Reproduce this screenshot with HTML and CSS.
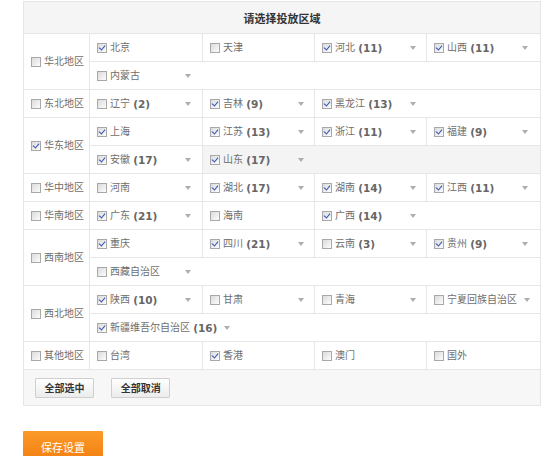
FILE: index.html
```html
<!DOCTYPE html>
<html lang="zh-CN">
<head>
<meta charset="utf-8">
<title>请选择投放区域</title>
<link rel="stylesheet" href="styles.css">
</head>
<body>
<div class="page">
  <table class="area">
    <colgroup>
      <col class="c-region"><col class="c-p1"><col class="c-p2"><col class="c-p3"><col class="c-p4">
    </colgroup>
    <thead>
      <tr><th colspan="5">请选择投放区域</th></tr>
    </thead>
    <tbody>
      <tr class="r">
        <td rowspan="2" class="region"><span class="lbl"><i class="cb"></i>华北地区</span></td>
        <td><span class="lbl"><i class="cb on"></i>北京</span></td>
        <td><span class="lbl"><i class="cb"></i>天津</span></td>
        <td><span class="lbl"><i class="cb on"></i>河北&nbsp;<b>(11)</b></span><i class="arrow"></i></td>
        <td><span class="lbl"><i class="cb on"></i>山西&nbsp;<b>(11)</b></span><i class="arrow"></i></td>
      </tr>
      <tr class="r">
        <td colspan="4"><span class="lbl"><i class="cb"></i>内蒙古</span><i class="arrow"></i></td>
      </tr>

      <tr class="r">
        <td class="region"><span class="lbl"><i class="cb"></i>东北地区</span></td>
        <td><span class="lbl"><i class="cb"></i>辽宁&nbsp;<b>(2)</b></span><i class="arrow"></i></td>
        <td><span class="lbl"><i class="cb on"></i>吉林&nbsp;<b>(9)</b></span><i class="arrow"></i></td>
        <td colspan="2"><span class="lbl"><i class="cb on"></i>黑龙江&nbsp;<b>(13)</b></span><i class="arrow"></i></td>
      </tr>

      <tr class="r">
        <td rowspan="2" class="region"><span class="lbl"><i class="cb on"></i>华东地区</span></td>
        <td><span class="lbl"><i class="cb on"></i>上海</span></td>
        <td><span class="lbl"><i class="cb on"></i>江苏&nbsp;<b>(13)</b></span><i class="arrow"></i></td>
        <td><span class="lbl"><i class="cb on"></i>浙江&nbsp;<b>(11)</b></span><i class="arrow"></i></td>
        <td><span class="lbl"><i class="cb on"></i>福建&nbsp;<b>(9)</b></span><i class="arrow"></i></td>
      </tr>
      <tr class="r">
        <td><span class="lbl"><i class="cb on"></i>安徽&nbsp;<b>(17)</b></span><i class="arrow"></i></td>
        <td colspan="3" class="hover"><span class="lbl"><i class="cb on"></i>山东&nbsp;<b>(17)</b></span><i class="arrow"></i></td>
      </tr>

      <tr class="r">
        <td class="region"><span class="lbl"><i class="cb"></i>华中地区</span></td>
        <td><span class="lbl"><i class="cb"></i>河南</span><i class="arrow"></i></td>
        <td><span class="lbl"><i class="cb on"></i>湖北&nbsp;<b>(17)</b></span><i class="arrow"></i></td>
        <td><span class="lbl"><i class="cb on"></i>湖南&nbsp;<b>(14)</b></span><i class="arrow"></i></td>
        <td><span class="lbl"><i class="cb on"></i>江西&nbsp;<b>(11)</b></span><i class="arrow"></i></td>
      </tr>

      <tr class="r">
        <td class="region"><span class="lbl"><i class="cb"></i>华南地区</span></td>
        <td><span class="lbl"><i class="cb on"></i>广东&nbsp;<b>(21)</b></span><i class="arrow"></i></td>
        <td><span class="lbl"><i class="cb"></i>海南</span></td>
        <td colspan="2"><span class="lbl"><i class="cb on"></i>广西&nbsp;<b>(14)</b></span><i class="arrow"></i></td>
      </tr>

      <tr class="r">
        <td rowspan="2" class="region"><span class="lbl"><i class="cb"></i>西南地区</span></td>
        <td><span class="lbl"><i class="cb on"></i>重庆</span></td>
        <td><span class="lbl"><i class="cb on"></i>四川&nbsp;<b>(21)</b></span><i class="arrow"></i></td>
        <td><span class="lbl"><i class="cb"></i>云南&nbsp;<b>(3)</b></span><i class="arrow"></i></td>
        <td><span class="lbl"><i class="cb on"></i>贵州&nbsp;<b>(9)</b></span><i class="arrow"></i></td>
      </tr>
      <tr class="r">
        <td colspan="4"><span class="lbl"><i class="cb"></i>西藏自治区</span><i class="arrow"></i></td>
      </tr>

      <tr class="r">
        <td rowspan="2" class="region"><span class="lbl"><i class="cb"></i>西北地区</span></td>
        <td><span class="lbl"><i class="cb on"></i>陕西&nbsp;<b>(10)</b></span><i class="arrow"></i></td>
        <td><span class="lbl"><i class="cb"></i>甘肃</span><i class="arrow"></i></td>
        <td><span class="lbl"><i class="cb"></i>青海</span><i class="arrow"></i></td>
        <td><span class="lbl"><i class="cb"></i>宁夏回族自治区</span><i class="arrow"></i></td>
      </tr>
      <tr class="r">
        <td colspan="4"><span class="lbl"><i class="cb on"></i>新疆维吾尔自治区&nbsp;<b>(16)</b></span><i class="arrow"></i></td>
      </tr>

      <tr class="r">
        <td class="region"><span class="lbl"><i class="cb"></i>其他地区</span></td>
        <td><span class="lbl"><i class="cb"></i>台湾</span></td>
        <td><span class="lbl"><i class="cb on"></i>香港</span></td>
        <td><span class="lbl"><i class="cb"></i>澳门</span></td>
        <td><span class="lbl"><i class="cb"></i>国外</span></td>
      </tr>
    </tbody>
    <tfoot>
      <tr>
        <td colspan="5" class="actions">
          <button class="btn" type="button">全部选中</button>
          <button class="btn" type="button">全部取消</button>
        </td>
      </tr>
    </tfoot>
  </table>

  <button class="save" type="button">保存设置</button>
</div>
</body>
</html>
```

FILE: styles.css
```css
html, body {
  margin: 0;
  padding: 0;
  background: #fff;
}

body {
  font-family: "DejaVu Sans", "Noto Sans CJK SC", sans-serif;
  font-size: 10px;
  color: #6e6e6e;
}

.page {
  padding: 1px 0 0 23px;
}

.area {
  width: 517px;
  table-layout: fixed;
  border-collapse: collapse;
  border: 1px solid #e2e2e2;
}

.c-region { width: 66px; }
.c-p1 { width: 113px; }
.c-p2 { width: 112px; }
.c-p3 { width: 112px; }
.c-p4 { width: 114px; }

.area th {
  height: 31px;
  padding: 0;
  background: #f5f5f5;
  border: 1px solid #e6e6e6;
  font-family: "Noto Sans CJK SC", sans-serif;
  font-size: 11px;
  font-weight: bold;
  color: #333;
  text-align: center;
  vertical-align: middle;
}

.area td {
  border: 1px solid #e6e6e6;
  padding: 0 0 0 7px;
  vertical-align: middle;
  white-space: nowrap;
}

.r > td {
  height: 27px;
}

.area td.region {
  padding-left: 7px;
}

.area td.hover {
  background: #f4f4f4;
}

.lbl {
  display: inline-flex;
  align-items: center;
  min-width: 81px;
  vertical-align: middle;
  line-height: 14px;
}

.region .lbl {
  min-width: 0;
}

.lbl b {
  font-family: "DejaVu Sans", sans-serif;
  font-size: 10.5px;
  font-weight: bold;
  color: #666;
}

.cb {
  position: relative;
  display: inline-block;
  flex: none;
  width: 10px;
  height: 10px;
  box-sizing: border-box;
  margin-right: 3px;
  border: 1px solid #a8a8a8;
  background: linear-gradient(135deg, #dcdcdc 0%, #f2f2f2 70%, #fdfdfd 100%);
}

.cb.on::after {
  content: "";
  position: absolute;
  left: 2px;
  top: 0;
  width: 3px;
  height: 5px;
  border: solid #3553b3;
  border-width: 0 1.5px 1.5px 0;
  transform: rotate(40deg);
}

.arrow {
  display: inline-block;
  width: 0;
  height: 0;
  margin-left: 7px;
  vertical-align: middle;
  border-left: 3.5px solid transparent;
  border-right: 3.5px solid transparent;
  border-top: 4px solid #adadad;
}

.area td.actions {
  height: 35px;
  padding: 0 0 0 11px;
  background: #f7f7f7;
}

.btn {
  height: 20px;
  width: 59px;
  margin: 0 14px 0 0;
  padding: 0;
  border: 1px solid #cfcfcf;
  border-radius: 1px;
  background: linear-gradient(#ffffff, #ececec);
  font-family: "Noto Sans CJK SC", sans-serif;
  font-size: 10px;
  font-weight: bold;
  color: #333;
}

.save {
  display: block;
  margin-top: 25px;
  width: 80px;
  height: 32px;
  padding: 0;
  border: 0;
  border-radius: 1px;
  background: linear-gradient(#fb9a2a, #f27d0c);
  font-family: "Noto Sans CJK SC", sans-serif;
  font-size: 11px;
  color: #fff;
}
```
